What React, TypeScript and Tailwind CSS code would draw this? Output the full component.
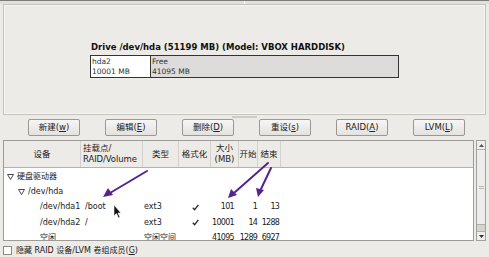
import React from "react";

const font = { fontFamily: '"DejaVu Sans", "Noto Sans CJK SC", sans-serif' };

function Btn({ label, u }: { label: string; u: string }) {
  return (
    <div className="w-[52px] h-[17px] border border-[#9a9894] rounded-[2px] bg-gradient-to-b from-[#f7f6f5] to-[#e4e2de] flex items-center justify-center text-[8.5px] leading-none text-[#222] whitespace-nowrap">
      <span>
        {label}(<span className="underline">{u}</span>)
      </span>
    </div>
  );
}

const cols = [77, 62, 36, 32, 28, 19, 23];

function Tri({ x }: { x: number }) {
  return (
    <svg width="7" height="6" viewBox="0 0 7 6" className="absolute" style={{ left: x, top: 5 }}>
      <path d="M0.5 0.5 L6.5 0.5 L3.5 5.5 Z" fill="none" stroke="#4a4a4a" strokeWidth="1" />
    </svg>
  );
}

export default function App() {
  const dataRows = [
    { dev: "/dev/hda1", mnt: "/boot", type: "ext3", fmt: true, size: "101", start: "1", end: "13" },
    { dev: "/dev/hda2", mnt: "/", type: "ext3", fmt: true, size: "10001", start: "14", end: "1288" },
    { dev: "空闲", mnt: "", type: "空闲空间", fmt: false, size: "41095", start: "1289", end: "6927" },
  ];
  const hdr = "border-r border-[#d4d1cc] flex items-center justify-center whitespace-nowrap";
  return (
    <div className="w-[489px] h-[257px] bg-[#edebe7] relative overflow-hidden flex flex-col" style={font}>
      <div className="h-px bg-[#7d7b78]" />
      <div className="h-[3px] bg-[#e2e0dc] flex justify-center">
        <div className="w-px h-[3px] bg-white" />
      </div>
      {/* drive panel */}
      <div className="mx-[3px] h-[111px] border border-[#c7c4be] shadow-[inset_0_0_0_1px_#f6f5f3] flex flex-col items-center justify-center">
        <div className="w-[309px] flex flex-col mt-[2px]">
          <div className="text-[8.5px] font-bold leading-none text-[#111] mb-[3px] pl-px whitespace-nowrap">
            Drive /dev/hda (51199 MB) (Model: VBOX HARDDISK)
          </div>
          <div className="h-[23px] border border-[#333] flex text-[7.5px] leading-[10px] text-[#333]">
            <div className="w-[60px] bg-white border-r border-[#333] pl-[1px] pt-[1px]">
              <div>hda2</div>
              <div>10001 MB</div>
            </div>
            <div className="flex-1 bg-[#dddcda] pl-[1px] pt-[1px]">
              <div>Free</div>
              <div>41095 MB</div>
            </div>
          </div>
        </div>
      </div>
      {/* grip */}
      <div className="h-[4px] flex justify-center items-center">
        <div className="w-[25px] h-[2px] bg-[#cfccc7]" />
      </div>
      {/* buttons */}
      <div className="flex pl-[28px] gap-[25px]">
        <Btn label="新建" u="w" />
        <Btn label="编辑" u="E" />
        <Btn label="删除" u="D" />
        <Btn label="重设" u="s" />
        <Btn label="RAID" u="A" />
        <Btn label="LVM" u="L" />
      </div>
      {/* tree + scrollbar */}
      <div className="flex mt-[4px] pl-[3px] h-[101px]">
        <div className="w-[471px] border border-[#9d9b97] bg-white flex flex-col overflow-hidden">
          <div className="h-[27px] shrink-0 bg-[#edebe7] border-b border-[#b5b2ac] flex text-[8.5px] leading-[11px] text-[#222]">
            <div className={hdr} style={{ width: cols[0] }}>设备</div>
            <div className="border-r border-[#d4d1cc] flex flex-col justify-center pl-[2px] whitespace-nowrap" style={{ width: cols[1] }}>
              <div>挂载点/</div>
              <div className="tracking-[-0.1px]">RAID/Volume</div>
            </div>
            <div className={hdr} style={{ width: cols[2] }}>类型</div>
            <div className={hdr} style={{ width: cols[3] }}>格式化</div>
            <div className="border-r border-[#d4d1cc] flex flex-col items-center justify-center whitespace-nowrap" style={{ width: cols[4] }}>
              <div>大小</div>
              <div>(MB)</div>
            </div>
            <div className={hdr} style={{ width: cols[5] }}>开始</div>
            <div className={hdr} style={{ width: cols[6] }}>结束</div>
            <div className="flex-1" />
          </div>
          <div className="relative h-[15px] shrink-0 mt-[1px]">
            <Tri x={3} />
            <div className="absolute left-[13px] top-0 h-[15px] flex items-center text-[8px] text-[#1a1a1a] whitespace-nowrap">硬盘驱动器</div>
          </div>
          <div className="relative h-[15.5px] shrink-0">
            <Tri x={14} />
            <div className="absolute left-[24px] top-0 h-[15px] flex items-center text-[8px] text-[#1a1a1a] whitespace-nowrap">/dev/hda</div>
          </div>
          {dataRows.map((r, i) => (
            <div key={i} className="h-[15.5px] shrink-0 flex items-center text-[8px] leading-none text-[#1a1a1a] whitespace-nowrap">
              <div className="pl-[36px]" style={{ width: cols[0] + 4 }}>{r.dev}</div>
              <div style={{ width: cols[1] - 4 }}>{r.mnt}</div>
              <div className="pl-[1px]" style={{ width: cols[2] }}>{r.type}</div>
              <div className="flex justify-center pl-[1px]" style={{ width: cols[3] }}>
                {r.fmt ? (
                  <svg width="7" height="7" viewBox="0 0 7 7">
                    <path d="M0.8 3.8 L2.6 5.8 L6.3 0.8" fill="none" stroke="#222" strokeWidth="1.3" />
                  </svg>
                ) : null}
              </div>
              <div className="text-right pr-[5px] tracking-[-0.7px]" style={{ width: cols[4] }}>{r.size}</div>
              <div className="text-right pr-[1px] tracking-[-0.8px]" style={{ width: cols[5] }}>{r.start}</div>
              <div className="text-right pr-[2px] tracking-[-0.8px]" style={{ width: cols[6] }}>{r.end}</div>
            </div>
          ))}
        </div>
        <div className="ml-[2px] w-[10px] border border-[#a3a09b] bg-[#d6d3ce] flex flex-col">
          <div className="h-[9px] bg-[#efeeec] border-b border-[#b3b0aa] flex items-center justify-center">
            <svg width="5" height="3" viewBox="0 0 5 3"><path d="M0 3 L2.5 0 L5 3 Z" fill="#555" /></svg>
          </div>
          <div className="h-[75px] bg-[#eeedeb] border-b border-[#b3b0aa] flex flex-col items-center justify-center gap-[1px]">
            <div className="w-[5px] h-px bg-[#bdbab4]" />
            <div className="w-[5px] h-px bg-[#bdbab4]" />
          </div>
          <div className="flex-1" />
          <div className="h-[9px] bg-[#efeeec] border-t border-[#b3b0aa] flex items-center justify-center">
            <svg width="5" height="3" viewBox="0 0 5 3"><path d="M0 0 L2.5 3 L5 0 Z" fill="#333" /></svg>
          </div>
        </div>
      </div>
      {/* checkbox */}
      <div className="flex items-center mt-[5px] pl-[3px] gap-[4px] text-[8px] leading-none text-[#222] whitespace-nowrap">
        <div className="w-[9px] h-[9px] border border-[#8a8884] bg-white" />
        <span>隐藏 RAID 设备/LVM 卷组成员(<span className="underline">G</span>)</span>
      </div>
      {/* annotation arrows and cursor */}
      <svg className="absolute left-0 top-0 pointer-events-none" width="489" height="257" viewBox="0 0 489 257">
        <g stroke="#55248f" strokeWidth="2" fill="#55248f" strokeLinecap="round">
          <line x1="147" y1="171" x2="110" y2="193" />
          <path d="M103 197 L108 188 L113 195 Z" stroke="none" />
          <line x1="268" y1="163" x2="234" y2="193" />
          <path d="M228 198 L231 189 L237 195 Z" stroke="none" />
          <line x1="271" y1="168" x2="261" y2="189" />
          <path d="M258 197 L256 188 L264 190 Z" stroke="none" />
        </g>
        <path d="M114 205 L114 216 L116.5 213.5 L118.5 218 L120 217.3 L118 213 L121 213 Z" fill="#111" stroke="#fff" strokeWidth="0.6" />
      </svg>
    </div>
  );
}
